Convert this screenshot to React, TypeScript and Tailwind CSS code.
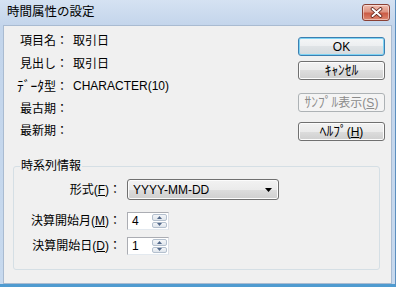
import type { ReactNode } from "react";

const FONT = "font-['Liberation_Sans','Noto_Sans_CJK_JP',sans-serif]";

function Key({ children }: { children: ReactNode }) {
  return <span className="underline underline-offset-[1px]">{children}</span>;
}

// half-width katakana renders small in Noto, bump it a bit
function Kana({ children }: { children: ReactNode }) {
  return <span className="text-[13.5px]">{children}</span>;
}

function Button({
  children,
  variant = "normal",
  className = "",
}: {
  children: ReactNode;
  variant?: "normal" | "default" | "disabled";
  className?: string;
}) {
  const look =
    variant === "default"
      ? "border-[#3c7fb1] bg-[linear-gradient(to_bottom,#f4f6f7_0%,#eceef0_50%,#dfe3e6_50%,#d5dadd_100%)] shadow-[inset_0_0_0_1px_#7fd3f3] text-black"
      : variant === "disabled"
        ? "border-[#adb2b5] bg-[#f4f4f4] text-[#8b8b8b]"
        : "border-[#707070] bg-[linear-gradient(to_bottom,#f2f2f2_0%,#ebebeb_50%,#dddddd_50%,#cfcfcf_100%)] shadow-[inset_0_0_0_1px_#fcfcfc] text-black";
  return (
    <div
      className={`flex h-[19px] w-[87px] items-center justify-center rounded-[3px] border text-[12px] leading-none ${look} ${className}`}
    >
      {children}
    </div>
  );
}

function Spinner() {
  const half =
    "flex flex-1 items-center justify-center rounded-[2px] border border-[#b4c0ce] bg-[linear-gradient(to_bottom,#f4f6f9,#dfe5ec)]";
  return (
    <div className="flex h-full w-[16px] flex-col gap-px py-px pr-px">
      <div className={half}>
        <svg width="5" height="3" viewBox="0 0 5 3">
          <path d="M0 3 L2.5 0 L5 3Z" fill="#52688a" />
        </svg>
      </div>
      <div className={half}>
        <svg width="5" height="3" viewBox="0 0 5 3">
          <path d="M0 0 L2.5 3 L5 0Z" fill="#52688a" />
        </svg>
      </div>
    </div>
  );
}

function NumberBox({ value }: { value: string }) {
  return (
    <div className="flex h-[18px] w-[42px] items-stretch border border-[#abadb3] border-b-[#e3e9ef] border-r-[#dbdfe6] bg-white">
      <span className="flex flex-1 items-center pl-[4px] text-[12px] leading-none">{value}</span>
      <Spinner />
    </div>
  );
}

const rows: { label: ReactNode; value: string }[] = [
  { label: "項目名：", value: "取引日" },
  { label: "見出し：", value: "取引日" },
  { label: <><Kana>ﾃﾞｰﾀ</Kana>型：</>, value: "CHARACTER(10)" },
  { label: "最古期：", value: "" },
  { label: "最新期：", value: "" },
];

export default function App() {
  return (
    <div
      className={`${FONT} flex h-[287px] w-[396px] flex-col border-r border-b-[3px] border-r-[#5c8fbf] border-b-[#4f9bd0] bg-[linear-gradient(to_bottom,#d5e2f2,#c3d5eb_26px,#c7d9ee)] text-black`}
    >
      <div className="flex h-[25px] items-center justify-between pl-[7px] pr-[5px]">
        <span className="text-[12.5px] leading-none">時間属性の設定</span>
        <div className="flex h-[17px] w-[28px] items-center justify-center rounded-[3px] border border-[#8a4034] bg-[linear-gradient(to_bottom,#efbdb0_0%,#de9583_45%,#cb5c46_55%,#dc8770_100%)] shadow-[inset_0_0_0_1px_rgba(255,255,255,0.45)]">
          <svg width="13" height="11" viewBox="0 0 13 11">
            <path d="M2.5 2 L10.5 9 M10.5 2 L2.5 9" stroke="#5b1d14" strokeWidth="3.6" strokeLinecap="round" />
            <path d="M2.5 2 L10.5 9 M10.5 2 L2.5 9" stroke="#ffffff" strokeWidth="2" strokeLinecap="round" />
          </svg>
        </div>
      </div>

      <div className="ml-[3px] mr-[3px] flex flex-1 flex-col border border-[#a9bbd1] bg-[#f0f0f0]">
        <div className="flex h-[134px] justify-between">
          <div className="pt-[4px]">
            {rows.map((r, i) => (
              <div key={i} className="flex h-[22.5px] items-center text-[12px] leading-none">
                <span className="w-[64px] text-right">{r.label}</span>
                <span className="ml-[5px]">{r.value}</span>
              </div>
            ))}
          </div>
          <div className="flex flex-col pr-[6px] pt-[11px]">
            <Button variant="default">OK</Button>
            <Button className="mt-[5px]">
              <Kana>ｷｬﾝｾﾙ</Kana>
            </Button>
            <Button variant="disabled" className="mt-[13px]">
              <Kana>ｻﾝﾌﾟﾙ</Kana>表示(<Key>S</Key>)
            </Button>
            <Button className="mt-[10px]">
              <Kana>ﾍﾙﾌﾟ</Kana>(<Key>H</Key>)
            </Button>
          </div>
        </div>

        <fieldset className="ml-[9px] mr-[11px] rounded-[3px] border border-[#d5dfe5] px-0 pb-[14px]">
          <legend className="ml-[6px] px-[1px] text-[12px] leading-[12px]">時系列情報</legend>
          <div className="mt-[7px] grid grid-cols-[107px_1fr] items-center gap-x-[6px] text-[12px] leading-none">
            <span className="text-right">
              形式(<Key>F</Key>)：
            </span>
            <div className="flex h-[21px] w-[152px] items-center justify-between rounded-[3px] border border-[#707070] bg-[linear-gradient(to_bottom,#f2f2f2_0%,#ebebeb_50%,#dddddd_50%,#cfcfcf_100%)] pl-[5px] pr-[6px] shadow-[inset_0_0_0_1px_#fcfcfc]">
              <span>YYYY-MM-DD</span>
              <svg width="7" height="4" viewBox="0 0 7 4">
                <path d="M0 0 L7 0 L3.5 4Z" fill="#000" />
              </svg>
            </div>

            <span className="mt-[12px] text-right">
              決算開始月(<Key>M</Key>)：
            </span>
            <div className="mt-[12px]">
              <NumberBox value="4" />
            </div>

            <span className="mt-[7px] text-right">
              決算開始日(<Key>D</Key>)：
            </span>
            <div className="mt-[7px]">
              <NumberBox value="1" />
            </div>
          </div>
        </fieldset>
      </div>
    </div>
  );
}
